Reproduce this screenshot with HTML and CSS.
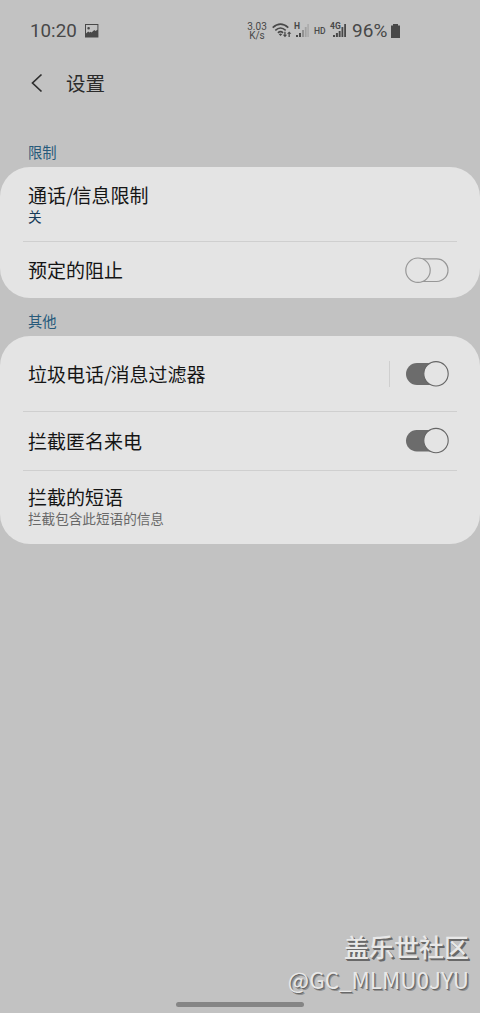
FILE: index.html
```html
<!DOCTYPE html>
<html lang="zh-CN">
<head>
<meta charset="utf-8">
<title>设置</title>
<link rel="stylesheet" href="styles.css">
</head>
<body>
<div class="phone">
  <div class="status">
    <span class="clock">10:20</span>
    <svg class="photo" width="14" height="14" viewBox="0 0 14 14"><path fill="#484848" fill-rule="evenodd" d="M0 0h13.4v13.4H0zM1 1V9.4L3.2 7.6l1.3 1 1-.9 1 .8L9.3 6l1.2 1 1.9-1.3V1zM3.6 3a1.3 1.3 0 1 1 0 2.6 1.3 1.3 0 0 1 0-2.6z"/></svg>
    <span class="speed"><span>3.03</span><span>K/s</span></span>
    <svg class="wifi" width="20" height="15" viewBox="0 0 20 15"><g fill="none" stroke="#484848" stroke-width="1.6"><path d="M.7 4.6Q8.5-2.4 16.3 4.6M3.3 7.3Q8.5 2.7 13.7 7.3M5.9 9.8Q8.5 7.6 11.1 9.8"/></g><path fill="#484848" d="M6.8 11.2Q8.5 10 10.2 11.2L8.5 13zM12.3 8.8h1.3v3h1.5L13 14.2l-2.2-2.4h1.5zM16.5 14h1.3v-3.2h1.5L17.2 8.4 15 10.8h1.5z"/></svg>
    <span class="cell hspa"><b>H</b><svg width="15" height="15" viewBox="0 0 15 15"><path fill="#484848" d="M2 12h2v2H2zM5 10h2v4H5z"/><path fill="#919191" d="M8 7h2v7H8z"/><path fill="#a2a2a2" d="M10.8 4h1.8v10h-1.8z"/><path fill="#adadad" d="M13.2 1H15v13h-1.8z"/></svg></span>
    <span class="hd">HD</span>
    <span class="cell lte"><b>4G</b><svg width="16" height="15" viewBox="0 0 16 15"><path fill="#484848" d="M3 12h2v2H3zM5.9 10h2v4h-2zM8.7 8h1.9v6H8.7zM11.5 4h1.8v10h-1.8zM14.2 1H16v13h-1.8z"/></svg></span>
    <span class="percent">96%</span>
    <svg class="battery" width="9" height="14" viewBox="0 0 9 14"><path fill="#484848" d="M2 0h5v1.5h2V14H0V1.5h2z"/></svg>
  </div>
  <header class="bar">
    <svg class="back" width="12" height="20" viewBox="0 0 12 20"><path d="M10.5 1.5L1.5 10l9 8.5" fill="none" stroke="#2e2e2e" stroke-width="1.7"/></svg>
    <h1>设置</h1>
  </header>
  <h2 class="label first">限制</h2>
  <section class="card">
    <div class="row call"><div class="text"><p class="title">通话<span class="slash">/</span>信息限制</p><p class="sub value">关</p></div></div>
    <div class="row schedule"><p class="title">预定的阻止</p>
      <svg class="switch" width="46" height="28" viewBox="0 0 46 28"><g fill="#e4e4e4" stroke="#979797" stroke-width="1.2"><rect x="7" y="2.9" width="37" height="22.6" rx="11.3"/><circle cx="14" cy="14.2" r="12.2"/></g></svg></div>
  </section>
  <h2 class="label second">其他</h2>
  <section class="card">
    <div class="row filter"><p class="title">垃圾电话<span class="slash">/</span>消息过滤器</p><span class="separator"></span>
      <svg class="switch" width="46" height="28" viewBox="0 0 46 28"><rect x="2" y="3" width="42" height="22" rx="11" fill="#6c6c6c"/><circle cx="32" cy="13.8" r="12.2" fill="#e4e4e4" stroke="#656565" stroke-width="1.1"/></svg></div>
    <div class="row anonymous"><p class="title">拦截匿名来电</p>
      <svg class="switch" width="46" height="28" viewBox="0 0 46 28"><rect x="2" y="3" width="42" height="21.5" rx="10.75" fill="#6c6c6c"/><circle cx="32" cy="13.6" r="12.2" fill="#e4e4e4" stroke="#656565" stroke-width="1.1"/></svg></div>
    <div class="row phrases"><div class="text"><p class="title">拦截的短语</p><p class="sub">拦截包含此短语的信息</p></div></div>
  </section>
  <div class="home"></div>
  <div class="watermark"><span class="brand">盖乐世社区</span><span class="user">@GC_MLMU0JYU</span></div>
</div>
</body>
</html>
```
FILE: styles.css
```css
* { box-sizing: border-box; }
body { margin: 0; background: #c2c2c2; }
h1, h2, p { margin: 0; font-weight: 400; }
.phone {
  position: relative;
  display: flex;
  flex-direction: column;
  width: 480px;
  height: 1013px;
  overflow: hidden;
  font-family: "Noto Sans CJK SC", sans-serif;
  color: #151515;
}
.status {
  display: flex;
  align-items: center;
  height: 61px;
  padding-left: 30px;
  font-family: Roboto, sans-serif;
  color: #484848;
  white-space: nowrap;
}
.status > * { flex: none; }
.clock { width: 55px; font-size: 18.8px; }
.speed {
  display: flex;
  flex-direction: column;
  align-items: center;
  width: 22px;
  margin-left: 147px;
  font-size: 10px;
  line-height: 9px;
}
.wifi { margin-left: 4px; }
.cell { position: relative; display: flex; margin-left: 2px; }
.cell b { position: absolute; left: 0; top: -1px; font-size: 8.5px; line-height: 8px; }
.hd { width: 13px; margin-left: 5px; font-size: 8.5px; font-weight: 500; }
.lte { margin-left: 3px; }
.percent { width: 38px; margin-left: 6px; font-size: 19px; letter-spacing: 0.1px; }
.battery { margin-left: 1px; }
.bar { display: flex; align-items: center; height: 44px; padding-left: 31px; }
.bar h1 { margin-left: 23px; font-size: 19.5px; line-height: 28px; color: #2b2b2b; }
.label { padding-left: 28px; font-size: 14.3px; line-height: 20px; color: #275a7b; }
.first { margin: 37px 0 5px; }
.second { margin: 13px 0 5px; }
.card { border-radius: 30px; background: #e4e4e4; }
.row { display: flex; align-items: center; margin: 0 23px; padding-left: 5px; padding-right: 7px; }
.row + .row { border-top: 1px solid #cfcfcf; }
.row .title { flex: 1; font-size: 19px; line-height: 24px; }
.slash { margin-right: -1px; }
.sub { font-size: 13.6px; line-height: 18px; color: #686868; }
.value { color: #183b59; }
.call { height: 74px; }
.schedule { height: 57px; }
.filter { height: 75px; }
.anonymous { height: 59px; padding-bottom: 1px; }
.phrases { height: 74px; padding-bottom: 3px; }
.separator { width: 1px; height: 26px; margin-right: 14px; background: #cfcfcf; }
.switch { flex: none; }
.home { align-self: center; width: 128px; height: 5px; margin-top: auto; margin-bottom: 6px; border-radius: 3px; background: #858585; }
.watermark {
  position: absolute;
  right: 11px;
  bottom: 17px;
  display: flex;
  flex-direction: column;
  align-items: flex-end;
  color: #e8e8e8;
  text-shadow: 1px 1px 0 #686868, 2px 2px 0 #686868;
  white-space: nowrap;
}
.brand { font-size: 25px; line-height: 33px; font-weight: 500; }
.user { font-size: 22.5px; line-height: 33px; text-shadow: 1px 1px 0 #686868, 2px 2px 0 #909090; }
```
